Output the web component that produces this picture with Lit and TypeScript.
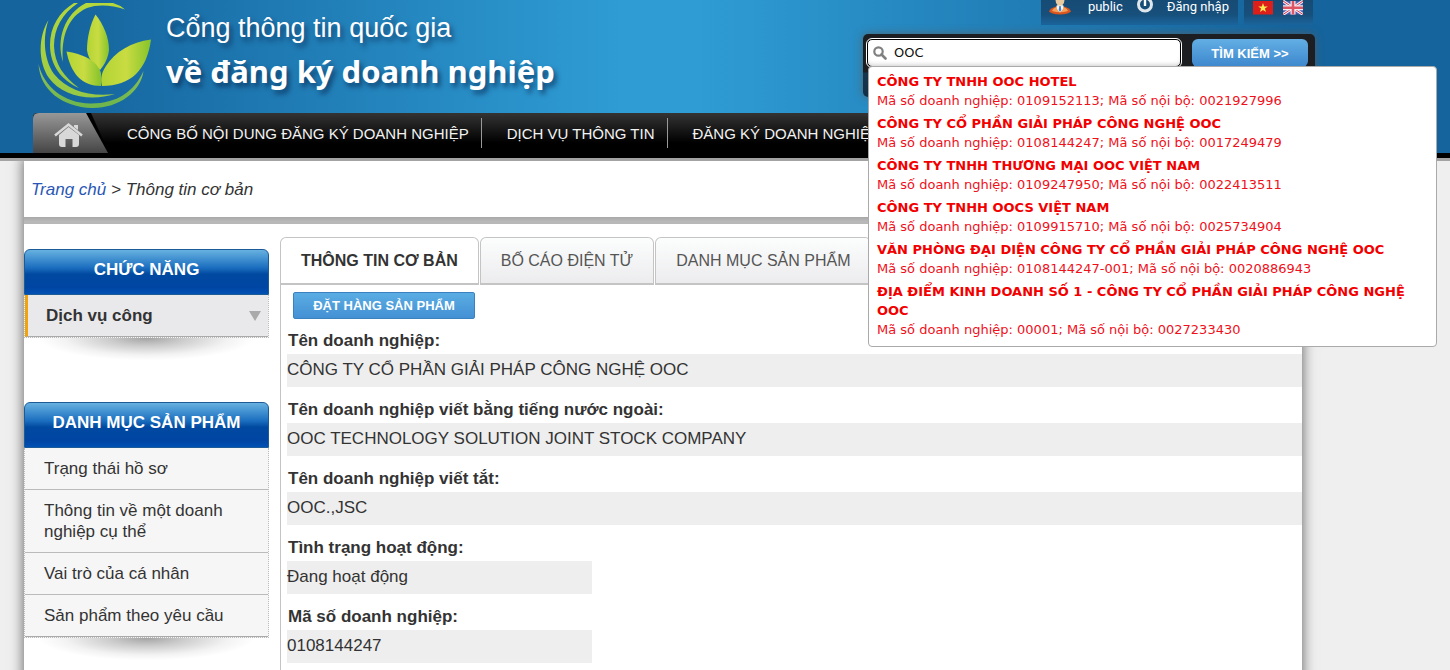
import { LitElement, html, css } from "lit";
import { customElement, state } from "lit/decorators.js";

interface Suggestion {
  name: string;
  code: string;
  internal: string;
}

interface Field {
  label: string;
  value: string;
  short?: boolean;
}

const SUGGESTIONS: Suggestion[] = [
  { name: "CÔNG TY TNHH OOC HOTEL", code: "0109152113", internal: "0021927996" },
  { name: "CÔNG TY CỔ PHẦN GIẢI PHÁP CÔNG NGHỆ OOC", code: "0108144247", internal: "0017249479" },
  { name: "CÔNG TY TNHH THƯƠNG MẠI OOC VIỆT NAM", code: "0109247950", internal: "0022413511" },
  { name: "CÔNG TY TNHH OOCS VIỆT NAM", code: "0109915710", internal: "0025734904" },
  { name: "VĂN PHÒNG ĐẠI DIỆN CÔNG TY CỔ PHẦN GIẢI PHÁP CÔNG NGHỆ OOC", code: "0108144247-001", internal: "0020886943" },
  { name: "ĐỊA ĐIỂM KINH DOANH SỐ 1 - CÔNG TY CỔ PHẦN GIẢI PHÁP CÔNG NGHỆ OOC", code: "00001", internal: "0027233430" },
];

const FIELDS: Field[] = [
  { label: "Tên doanh nghiệp:", value: "CÔNG TY CỔ PHẦN GIẢI PHÁP CÔNG NGHỆ OOC" },
  { label: "Tên doanh nghiệp viết bằng tiếng nước ngoài:", value: "OOC TECHNOLOGY SOLUTION JOINT STOCK COMPANY" },
  { label: "Tên doanh nghiệp viết tắt:", value: "OOC.,JSC" },
  { label: "Tình trạng hoạt động:", value: "Đang hoạt động", short: true },
  { label: "Mã số doanh nghiệp:", value: "0108144247", short: true },
];

const TABS = ["THÔNG TIN CƠ BẢN", "BỐ CÁO ĐIỆN TỬ", "DANH MỤC SẢN PHẨM"];
const MENU = ["CÔNG BỐ NỘI DUNG ĐĂNG KÝ DOANH NGHIỆP", "DỊCH VỤ THÔNG TIN", "ĐĂNG KÝ DOANH NGHIỆP"];
const PRODUCTS = ["Trạng thái hồ sơ", "Thông tin về một doanh nghiệp cụ thể", "Vai trò của cá nhân", "Sản phẩm theo yêu cầu"];

@customElement("app-root")
export class AppRoot extends LitElement {
  @state() private tab = 0;

  static styles = css`
    :host {
      display: block;
      height: 100vh;
      overflow: hidden;
      background: #efefef;
      color: #333;
      font: 17px/21px "Liberation Sans", Arial, sans-serif;
    }
    * { box-sizing: border-box; }
    a { color: inherit; text-decoration: none; }
    ul { list-style: none; margin: 0; padding: 0; }
    button { font-family: inherit; cursor: pointer; }

    .header {
      background: linear-gradient(90deg, #15649d 0, #15649d 4%, #2f9cd4 43%, #2f9cd4 48%, #15649d 89%, #15649d 100%);
      padding: 0 137px 0 33px;
      border-bottom: 5px solid #000;
      position: relative;
      z-index: 2;
    }
    .brandbar {
      height: 113px;
      display: flex;
      justify-content: space-between;
    }
    .brand { display: flex; }
    .logo { width: 124px; height: 113px; flex: none; }
    .title {
      margin: 0;
      padding: 10px 0 0 9px;
      color: #fff;
      font-size: 27px;
      font-weight: 400;
      line-height: 36px;
      white-space: nowrap;
      text-shadow: 3px 4px 5px rgba(0, 30, 70, 0.6);
    }
    .title strong {
      display: block;
      font: 700 31px/50px "Noto Sans", sans-serif;
    }
    .tools {
      display: flex;
      flex-direction: column;
      align-items: flex-end;
      width: 452px;
      margin-right: -2px;
    }
    .account {
      display: flex;
      gap: 6px;
      height: 25px;
      margin-right: 2px;
      color: #fff;
      font: 13px/13px Roboto, sans-serif;
    }
    .account > div {
      display: flex;
      align-items: flex-start;
      background: linear-gradient(#164b74, #17507c 60%, #1b659d);
    }
    .user { padding: 0 9px 0 8px; }
    .user svg { flex: none; }
    .user a { margin-left: 17px; }
    .user .power + a { margin-left: 13px; }
    .user .power { margin-left: 13px; }
    .langs { padding: 0 10px 0 9px; gap: 10px; }
    .search {
      position: relative;
      width: 100%;
      margin-top: 9px;
      height: 63px;
      padding: 5px 7px 0 4px;
      border-radius: 5px;
      background: linear-gradient(#1c1e21 0, #1c1e21 38px, #17354b 39px, #123048 100%);
      box-shadow: 0 0 8px rgba(90, 90, 90, 0.8);
      display: flex;
      align-items: flex-start;
      gap: 11px;
      margin-bottom: 16px;
    }
    .box {
      flex: 1;
      display: flex;
      align-items: center;
      height: 28px;
      padding-left: 5px;
      background: #fff;
      border: 1px solid #000;
      border-radius: 5px;
      outline: 1px solid #fff;
      box-shadow: inset 0 -4px 5px -3px #ccc;
    }
    .box input {
      flex: 1;
      min-width: 0;
      margin-left: 7px;
      padding: 0;
      border: 0;
      outline: 0;
      background: none;
      color: #111;
      font: 13px/20px "DejaVu Sans", Verdana, sans-serif;
    }
    .go {
      width: 116px;
      height: 28px;
      padding: 0;
      border: 0;
      border-radius: 6px;
      background: linear-gradient(#62aee4, #3d87cd);
      color: #fff;
      font-size: 13px;
      font-weight: 700;
    }
    .suggest {
      position: absolute;
      z-index: 5;
      top: 32px;
      left: 5px;
      right: -122px;
      padding: 5px 8px 3px;
      background: #fff;
      border: 1px solid #aaa;
      border-radius: 4px;
      color: #f0101a;
      font: 13px/19px "DejaVu Sans", Verdana, sans-serif;
    }
    .suggest li { padding-bottom: 4px; }
    .suggest strong { display: block; color: #f20000; }
    .suggest span { display: block; }

    .nav {
      display: flex;
      align-items: center;
      height: 40px;
      overflow: hidden;
      background: linear-gradient(#343434, #000 75%);
      color: #f2f2f2;
      font-size: 15px;
      white-space: nowrap;
      border-radius: 4px 0 0 0;
    }
    .home { flex: none; width: 76px; height: 40px; }
    .menu { display: flex; }
    .menu a {
      display: block;
      padding: 1px 12px 0 25px;
      line-height: 29px;
      border-right: 1px solid #999;
    }
    .menu li:first-child a { padding-left: 18px; }
    .menu li:last-child a { border: 0; }

    .page {
      margin: 0 148px 0 24px;
      min-height: 100%;
      background: #fff;
      box-shadow: 0 0 12px 1px rgba(0, 0, 0, 0.55);
    }
    .crumbs {
      padding: 18px 7px 17px;
      border-top: 3px solid #a3a3a3;
      font-style: italic;
    }
    .crumbs a { color: #2a57b5; }
    .divider { height: 7px; background: linear-gradient(#a8a8a8, #b8b8b8 60%); }
    .strip { height: 3px; background: #a3a3a3; position: relative; margin-bottom: -3px; }

    .body { display: flex; align-items: stretch; min-height: 560px; }
    .side { width: 245px; flex: none; padding-top: 25px; margin-right: 11px; }
    .block { padding-bottom: 39px; }
    .block h2 {
      margin: 0;
      height: 46px;
      border: 1px solid #1c5a98;
      border-radius: 6px 6px 0 0;
      background: linear-gradient(#66b1e0 0, #1c6fc0 40%, #0049a0 55%, #0045a3 85%, #0050b4 100%);
      color: #fff;
      font-size: 17px;
      line-height: 40px;
      text-align: center;
    }
    .block ul { border: 1px dotted #bbb; border-top: 0; background: #f6f6f6; }
    .block li a { display: block; padding: 10px 40px 10px 19px; border-bottom: 1px solid #bbb; }
    .block li:last-child a { border-bottom-color: #aaa; }
    .block .service {
      display: flex;
      align-items: center;
      justify-content: space-between;
      padding: 10px 7px 10px 18px;
      border-left: 3px solid #f0a30a;
      background: #e9e9eb;
      font-weight: 700;
    }
    .arrow {
      border: 6px solid transparent;
      border-top: 10px solid #aaa;
      border-bottom: 0;
    }
    .shade {
      height: 25px;
      background: radial-gradient(ellipse 44% 90% at 50% 0, rgba(0, 0, 0, 0.36), rgba(0, 0, 0, 0.2) 35%, rgba(0, 0, 0, 0.05) 75%, transparent);
    }

    .main { flex: 1; min-width: 0; padding-top: 13px; }
    .tabs { display: flex; gap: 1px; }
    .tab {
      flex: none;
      height: 48px;
      padding: 0 20px;
      border: 1px solid #c4c4c4;
      border-width: 1px 1px 2px;
      border-radius: 6px 6px 0 0;
      background: linear-gradient(#fcfdfd, #ececee);
      color: #555;
      font-size: 16px;
    }
    .tab.on { background: #fff; color: #333; font-weight: 700; }
    .rest { flex: 1; border-bottom: 2px solid #c4c4c4; margin-left: -2px; }
    .panel { border-left: 1px solid #c4c4c4; padding: 7px 0 0 6px; min-height: 500px; }
    .order {
      display: block;
      margin: 0 0 10px 6px;
      width: 182px;
      height: 27px;
      padding: 0;
      border: 1px solid #3a81c0;
      border-radius: 2px;
      background: linear-gradient(#5aade3, #4490d4);
      color: #fff;
      font: 700 13px/20px "Liberation Sans", Arial, sans-serif;
    }
    dl { margin: 0; }
    dt { font-weight: 700; line-height: 23px; padding: 0 0 2px 1px; }
    dd {
      margin: 0 0 11px;
      padding-bottom: 1px;
      line-height: 32px;
      background: #eee;
    }
    dd.short { width: 305px; }
  `;

  render() {
    return html`
      <header class="header">
        <div class="brandbar">
          <div class="brand">
            ${this.logo()}
            <h1 class="title">Cổng thông tin quốc gia<strong>về đăng ký doanh nghiệp</strong></h1>
          </div>
          <div class="tools">${this.account()} ${this.search()}</div>
        </div>
        <nav class="nav">
          <a class="home" href="#" aria-label="Trang chủ">
            <svg width="76" height="40" viewBox="0 0 76 40" aria-hidden="true">
              <defs>
                <linearGradient id="hm" x2="0" y2="1"><stop stop-color="#989898" /><stop offset="1" stop-color="#454545" /></linearGradient>
              </defs>
              <path d="M53 0h5l18 40h-5z" fill="#000" />
              <path d="M0 6Q0 0 6 0H53L75 40H0z" fill="url(#hm)" />
              <path d="M22 22.500 35.500 11.500 49 22.500" fill="none" stroke="#d8d8d8" stroke-width="2.500" />
              <path d="M41 12h4v5l-4-3zM26 22l9.500-8 10.500 8v9q0 3-3 3h-3.500v-8h-7v8H29q-3 0-3-3z" fill="#d8d8d8" />
            </svg>
          </a>
          <ul class="menu">${MENU.map((m) => html`<li><a href="#">${m}</a></li>`)}</ul>
        </nav>
      </header>
      <div class="strip"></div>
      <div class="page">
        <div class="crumbs"><a href="#">Trang chủ</a> &gt; Thông tin cơ bản</div>
        <div class="divider"></div>
        <div class="body">
          <aside class="side">
            <section class="block">
              <h2>CHỨC NĂNG</h2>
              <ul><li><a class="service" href="#">Dịch vụ công<span class="arrow"></span></a></li></ul>
              <div class="shade"></div>
            </section>
            <section class="block">
              <h2>DANH MỤC SẢN PHẨM</h2>
              <ul>${PRODUCTS.map((p) => html`<li><a href="#">${p}</a></li>`)}</ul>
              <div class="shade"></div>
            </section>
          </aside>
          <main class="main">
            <div class="tabs" role="tablist">
              ${TABS.map(
                (t, i) => html`<button class="tab ${i === this.tab ? "on" : ""}" role="tab"
                  aria-selected=${i === this.tab ? "true" : "false"} @click=${() => (this.tab = i)}>${t}</button>`
              )}
              <div class="rest"></div>
            </div>
            <div class="panel">
              <button class="order">ĐẶT HÀNG SẢN PHẨM</button>
              <dl>${FIELDS.map((f) => html`<dt>${f.label}</dt><dd class=${f.short ? "short" : ""}>${f.value}</dd>`)}</dl>
            </div>
          </main>
        </div>
      </div>
    `;
  }

  private account() {
    return html`<div class="account">
      <div class="user">
        <svg width="22" height="15" viewBox="0 0 22 15" aria-hidden="true">
          <path d="M0 11.500Q1 8 7 6.500h8q6 1.500 7 5-3 3-11 3t-11-3z" fill="#d9541e" />
          <path d="M3 11q1-3 5-4l3 4 3-4q4 1 5 4-8 2.500-16 0z" fill="#f5a05a" />
          <path d="M6.500 0h9q0 3-2 5l1 2-3.500 5-3.500-5 1-2q-2-2-2-5z" fill="#e9c9a0" />
          <path d="M7.500 5.500h7L14 9l-3 3.500L8 9z" fill="#f2f6fb" />
          <path d="M10.300 6h1.400l.6 4-1.300 2-1.300-2z" fill="#3f83c4" />
        </svg>
        <a href="#">public</a>
        <svg class="power" width="18" height="14" viewBox="0 0 18 14" aria-hidden="true">
          <circle cx="9" cy="4.500" r="6.500" fill="none" stroke="#dfe6ec" stroke-width="3" />
          <path d="M9 0v6" stroke="#fff" stroke-width="2.400" />
        </svg>
        <a href="#">Đăng nhập</a>
      </div>
      <div class="langs">
        <a href="#" aria-label="Tiếng Việt"><svg width="20" height="15" viewBox="0 0 20 15">
          <path d="M0 1h20v13.500H0z" fill="#dd1f1c" />
          <path d="m10 3 1.200 3.400h3.600l-2.900 2.200 1.100 3.500-3-2.100-3 2.100 1.100-3.500-2.900-2.200h3.600z" fill="#fce94f" />
        </svg></a>
        <a href="#" aria-label="English"><svg width="20" height="15" viewBox="0 0 20 15">
          <path d="M0 1h20v13.500H0z" fill="#4a5cab" />
          <path d="m0 1 20 13.500M20 1 0 14.500" stroke="#f3eaf2" stroke-width="3" />
          <path d="m0 1 20 13.500M20 1 0 14.500" stroke="#d8394b" />
          <path d="M10 1v13.500M0 7.750h20" stroke="#f3eaf2" stroke-width="5" />
          <path d="M10 1v13.500M0 7.750h20" stroke="#dd5563" stroke-width="2.600" />
        </svg></a>
      </div>
    </div>`;
  }

  private search() {
    return html`<form class="search" @submit=${(e: Event) => e.preventDefault()}>
      <label class="box">
        <svg width="14" height="14" viewBox="0 0 14 14" aria-hidden="true">
          <circle cx="5.500" cy="5.500" r="4.200" fill="none" stroke="#808080" stroke-width="2.200" />
          <path d="m8.500 8.500 4 4" stroke="#808080" stroke-width="2.600" stroke-linecap="round" />
        </svg>
        <input type="text" aria-label="Tìm kiếm doanh nghiệp" .value=${"OOC"} />
      </label>
      <button class="go">TÌM KIẾM &gt;&gt;</button>
      <ul class="suggest">
        ${SUGGESTIONS.map(
          (s) => html`<li><strong>${s.name}</strong><span>Mã số doanh nghiệp: ${s.code}; Mã số nội bộ: ${s.internal}</span></li>`
        )}
      </ul>
    </form>`;
  }

  private logo() {
    return html`<svg class="logo" viewBox="33 0 124 113" aria-hidden="true">
      <defs>
        <linearGradient id="lf" x2="1"><stop stop-color="#b2d433" /><stop offset=".5" stop-color="#c9dc42" /><stop offset="1" stop-color="#86c32b" /></linearGradient>
        <linearGradient id="ar" x2="0" y2="1"><stop stop-color="#b5d83a" /><stop offset="1" stop-color="#96c846" /></linearGradient>
        <linearGradient id="lo" x2="0" y2="1"><stop stop-color="#8fc25a" /><stop offset="1" stop-color="#6db54b" /></linearGradient>
      </defs>
      <path d="M38.500 64C44 87 64 103 90 103.500S134 92 143.500 71C141 92 118 108.500 92 108 62 107 40 90 38.500 64z" fill="url(#lo)" />
      <g fill="url(#ar)">
        <path d="M48.500 20C43 36 43 58 54 74c14 17 36 23 61 20C90 102 62 96 49 78 38 62 38 37 48.500 20z" />
        <path d="M78 3h-4C59 12 50 27 50 45c0 20 11 35 29 43C64 77 54.500 64 54 46 54 28 62 14 78 3z" />
        <path d="M63 62C56 40 64 14 86 3h27q7 2 12 6.500C112 5 98 4 87 8 67 17 61 38 63 62z" />
      </g>
      <g fill="url(#lf)">
        <path d="M95.500 14.500C104 25 109 38 109 50c-1 8-4 14-9 20-6-4-12-11-13-20 0-12 3-25 8.500-35.500z" />
        <path d="M66.500 51.500C82 54 97 60 101 73v13C82 86 71 74 66.500 51.500z" />
        <path d="M151 39.500C147 70 131 86 102 86c-2-8 0-14 4-20 9-14 25-24 45-26.500z" />
      </g>
    </svg>`;
  }
}
